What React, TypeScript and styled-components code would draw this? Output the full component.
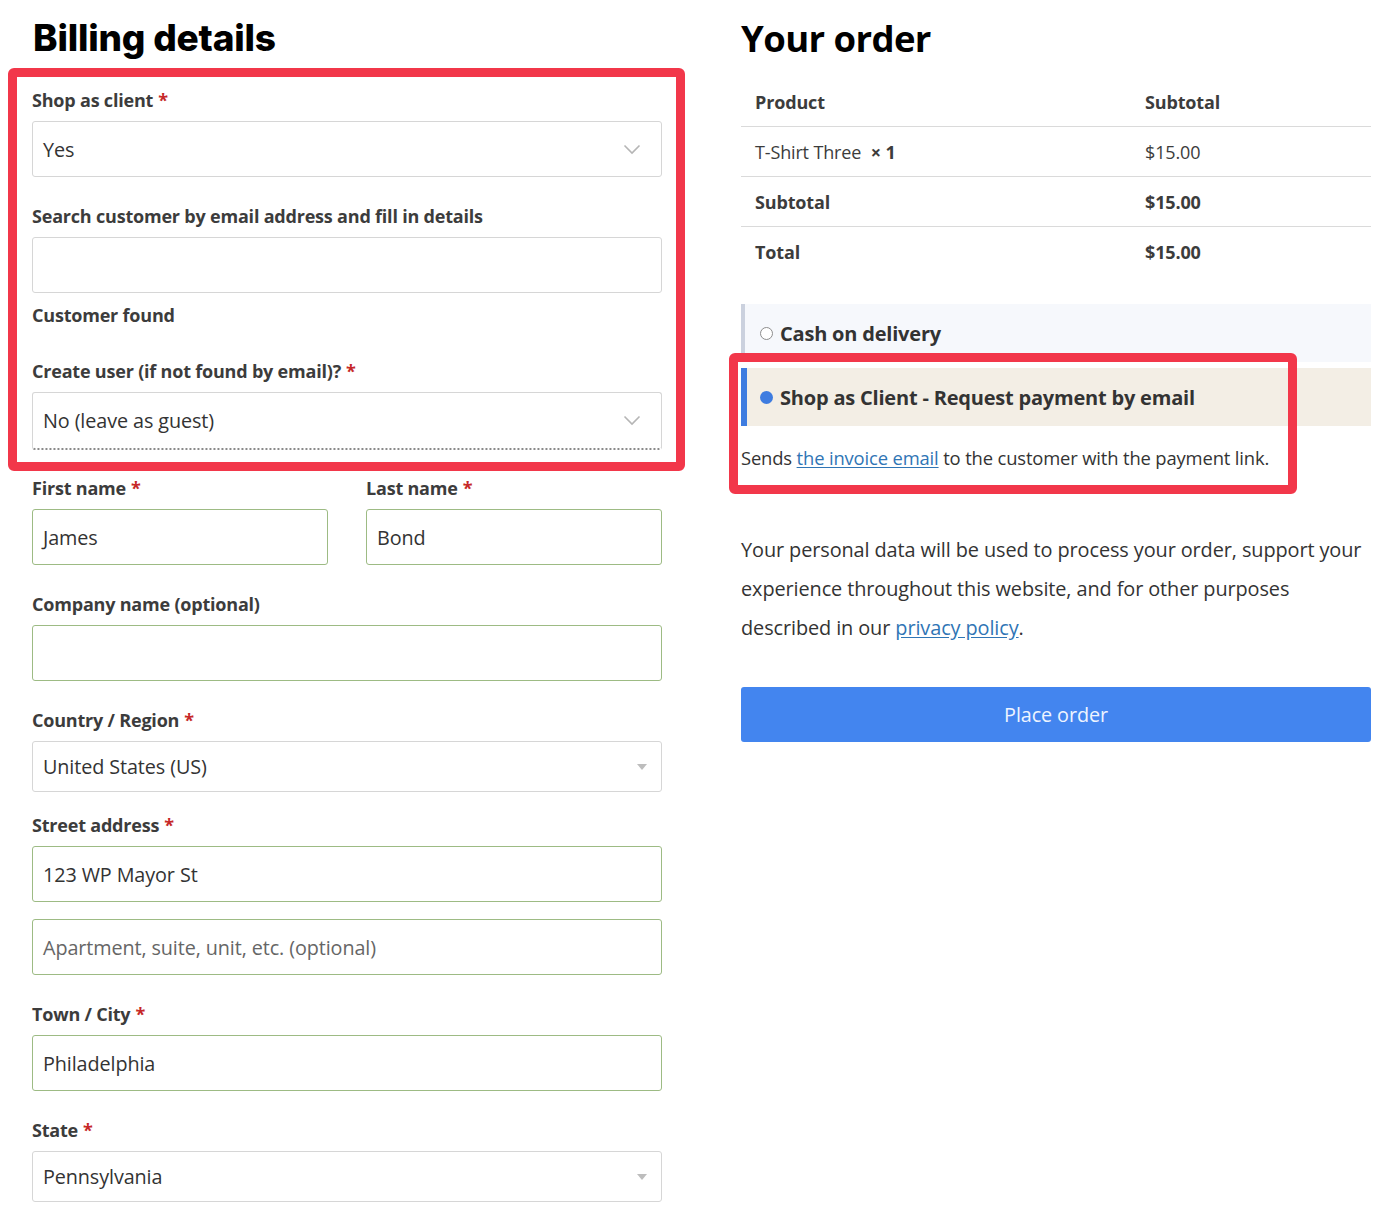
import React from "react";
import styled, { createGlobalStyle } from "styled-components";

const Global = createGlobalStyle`
  html, body { margin: 0; padding: 0; background: #fff; }
  body { font-family: "Open Sans", "Noto Sans", sans-serif; color: #333; }
  * { box-sizing: border-box; }
`;

const Page = styled.div`
  display: grid;
  grid-template-columns: 630px 630px;
  column-gap: 79px;
  padding: 16px 30px 0 32px;
  width: 1400px;
  height: 1223px;
  overflow: hidden;
`;

const Column = styled.section`
  position: relative;
  display: flex;
  flex-direction: column;
`;

const BillingTitle = styled.h1`
  margin: 0 0 28px 1px;
  font-family: "Inter", "Open Sans", sans-serif;
  font-weight: 800;
  font-size: 37px;
  line-height: 44px;
  letter-spacing: -0.2px;
  color: #000;
`;

const OrderTitle = styled.h2`
  margin: 0 0 17px 0;
  font-family: "Open Sans", sans-serif;
  font-weight: 700;
  font-size: 36.5px;
  line-height: 44px;
  letter-spacing: -0.6px;
  color: #000;
`;

const Field = styled.div<{ $mb?: number }>`
  display: flex;
  flex-direction: column;
  gap: 9px;
  margin-bottom: ${(p) => (p.$mb ?? 26)}px;
`;

const Label = styled.label`
  font-size: 18px;
  font-weight: 700;
  line-height: 24px;
  color: #3c3c3c;
  letter-spacing: -0.2px;
`;

const Req = styled.span`
  color: #c62828;
  margin-left: 5px;
`;

const Info = styled.div`
  font-size: 18px;
  font-weight: 700;
  line-height: 24px;
  color: #3c3c3c;
  letter-spacing: -0.2px;
  margin-top: 10px;
  margin-bottom: 32px;
`;

const Box = styled.div<{ $h?: number; $valid?: boolean; $dotted?: boolean }>`
  height: ${(p) => p.$h ?? 56}px;
  border: 1px solid ${(p) => (p.$valid ? "#9dbb84" : "#d6d6d6")};
  ${(p) => (p.$dotted ? "border-bottom: 2px dotted #8a8a8a;" : "")}
  border-radius: 3px;
  background: #fff;
  display: flex;
  align-items: center;
  justify-content: space-between;
  padding: 0 20px 0 10px;
  font-size: 19.8px;
  color: #333;
  letter-spacing: -0.1px;
  width: 100%;
`;

const Placeholder = styled.span`
  color: #666;
`;

const Row2 = styled.div`
  display: grid;
  grid-template-columns: 296px 296px;
  column-gap: 38px;
`;

const Chevron = () => (
  <svg width="18" height="11" viewBox="0 0 18 11" fill="none">
    <path d="M1.5 1.5 L9 9 L16.5 1.5" stroke="#b5b5b5" strokeWidth="1.6" />
  </svg>
);

const Caret = () => (
  <svg width="10" height="6" viewBox="0 0 10 6" style={{ marginRight: -6 }}>
    <path d="M0 0 L10 0 L5 6 Z" fill="#bdbdbd" />
  </svg>
);

const Highlight = styled.div<{ $l: number; $t: number; $w: number; $h: number }>`
  position: absolute;
  left: ${(p) => p.$l}px;
  top: ${(p) => p.$t}px;
  width: ${(p) => p.$w}px;
  height: ${(p) => p.$h}px;
  border: 9px solid #f2374a;
  border-radius: 6px;
  pointer-events: none;
`;

const Table = styled.div`
  display: flex;
  flex-direction: column;
  margin-bottom: 27px;
`;

const TRow = styled.div<{ $line?: boolean }>`
  display: grid;
  grid-template-columns: 390px 1fr;
  height: 50px;
  align-items: center;
  padding-left: 14px;
  border-bottom: ${(p) => (p.$line ? "1.5px solid #dadada" : "none")};
  font-size: 18px;
  color: #3c3c3c;
  letter-spacing: -0.15px;
`;

const Cell = styled.span<{ $bold?: boolean }>`
  font-weight: ${(p) => (p.$bold ? 700 : 400)};
`;

const Qty = styled.strong`
  margin-left: 5px;
  font-weight: 700;
`;

const PayList = styled.div`
  display: flex;
  flex-direction: column;
  gap: 6px;
`;

const PayItem = styled.div<{ $active?: boolean }>`
  height: 58px;
  display: flex;
  align-items: center;
  gap: 4px;
  padding-left: ${(p) => (p.$active ? 13 : 15)}px;
  background: ${(p) => (p.$active ? "#f3eee5" : "#f6f8fc")};
  border-left: ${(p) => (p.$active ? "6px solid #3e7ce0" : "4px solid #cbd1de")};
  font-size: 20px;
  font-weight: 700;
  color: #333;
  letter-spacing: -0.2px;
`;

const Radio = styled.span<{ $on?: boolean }>`
  width: 13px;
  height: 13px;
  border-radius: 50%;
  flex: none;
  margin-right: 3px;
  ${(p) =>
    p.$on
      ? "background: #3e7ce0;"
      : "border: 1px solid #8d8d8d; background: #fff;"}
`;

const PayDesc = styled.p`
  margin: 19px 0 0 0;
  font-size: 18.4px;
  line-height: 26px;
  color: #333;
  letter-spacing: -0.15px;
`;

const Link = styled.a`
  color: #2f75b5;
  text-decoration: underline;
  text-underline-offset: 2px;
`;

const Privacy = styled.p`
  margin: 59px 0 40px 0;
  font-size: 19.9px;
  line-height: 39px;
  color: #333;
  letter-spacing: -0.1px;
`;

const PlaceButton = styled.button`
  height: 55px;
  width: 100%;
  border: none;
  border-radius: 3px;
  background: #4385ef;
  color: #eef4ff;
  font-family: "Open Sans", sans-serif;
  font-size: 19.8px;
  letter-spacing: -0.1px;
`;

export default function App() {
  return (
    <>
      <Global />
      <Page>
        <Column>
          <BillingTitle>Billing details</BillingTitle>
          <Field $mb={27}>
            <Label>
              Shop as client<Req>*</Req>
            </Label>
            <Box>
              <span>Yes</span>
              <Chevron />
            </Box>
          </Field>
          <Field $mb={0}>
            <Label>Search customer by email address and fill in details</Label>
            <Box />
          </Field>
          <Info>Customer found</Info>
          <Field $mb={26}>
            <Label>
              Create user (if not found by email)?<Req>*</Req>
            </Label>
            <Box $h={58} $dotted>
              <span>No (leave as guest)</span>
              <Chevron />
            </Box>
          </Field>
          <Row2>
            <Field $mb={27}>
              <Label>
                First name<Req>*</Req>
              </Label>
              <Box $valid>James</Box>
            </Field>
            <Field $mb={27}>
              <Label>
                Last name<Req>*</Req>
              </Label>
              <Box $valid>Bond</Box>
            </Field>
          </Row2>
          <Field $mb={27}>
            <Label>Company name (optional)</Label>
            <Box $valid />
          </Field>
          <Field $mb={21}>
            <Label>
              Country / Region<Req>*</Req>
            </Label>
            <Box $h={51}>
              <span>United States (US)</span>
              <Caret />
            </Box>
          </Field>
          <Field $mb={17}>
            <Label>
              Street address<Req>*</Req>
            </Label>
            <Box $valid>123 WP Mayor St</Box>
          </Field>
          <Field $mb={27}>
            <Box $valid>
              <Placeholder>Apartment, suite, unit, etc. (optional)</Placeholder>
            </Box>
          </Field>
          <Field $mb={27}>
            <Label>
              Town / City<Req>*</Req>
            </Label>
            <Box $valid>Philadelphia</Box>
          </Field>
          <Field>
            <Label>
              State<Req>*</Req>
            </Label>
            <Box $h={51}>
              <span>Pennsylvania</span>
              <Caret />
            </Box>
          </Field>
          <Highlight $l={-24} $t={52} $w={677} $h={403} />
        </Column>
        <Column>
          <OrderTitle>Your order</OrderTitle>
          <Table>
            <TRow $line>
              <Cell $bold>Product</Cell>
              <Cell $bold>Subtotal</Cell>
            </TRow>
            <TRow $line>
              <Cell>
                T-Shirt Three <Qty>× 1</Qty>
              </Cell>
              <Cell>$15.00</Cell>
            </TRow>
            <TRow $line>
              <Cell $bold>Subtotal</Cell>
              <Cell $bold>$15.00</Cell>
            </TRow>
            <TRow>
              <Cell $bold>Total</Cell>
              <Cell $bold>$15.00</Cell>
            </TRow>
          </Table>
          <PayList>
            <PayItem>
              <Radio />
              Cash on delivery
            </PayItem>
            <PayItem $active>
              <Radio $on />
              Shop as Client - Request payment by email
            </PayItem>
          </PayList>
          <PayDesc>
            Sends <Link href="#">the invoice email</Link> to the customer with the payment link.
          </PayDesc>
          <Privacy>
            Your personal data will be used to process your order, support your experience
            throughout this website, and for other purposes described in our{" "}
            <Link href="#">privacy policy</Link>.
          </Privacy>
          <PlaceButton>Place order</PlaceButton>
          <Highlight $l={-12} $t={337} $w={568} $h={141} />
        </Column>
      </Page>
    </>
  );
}
